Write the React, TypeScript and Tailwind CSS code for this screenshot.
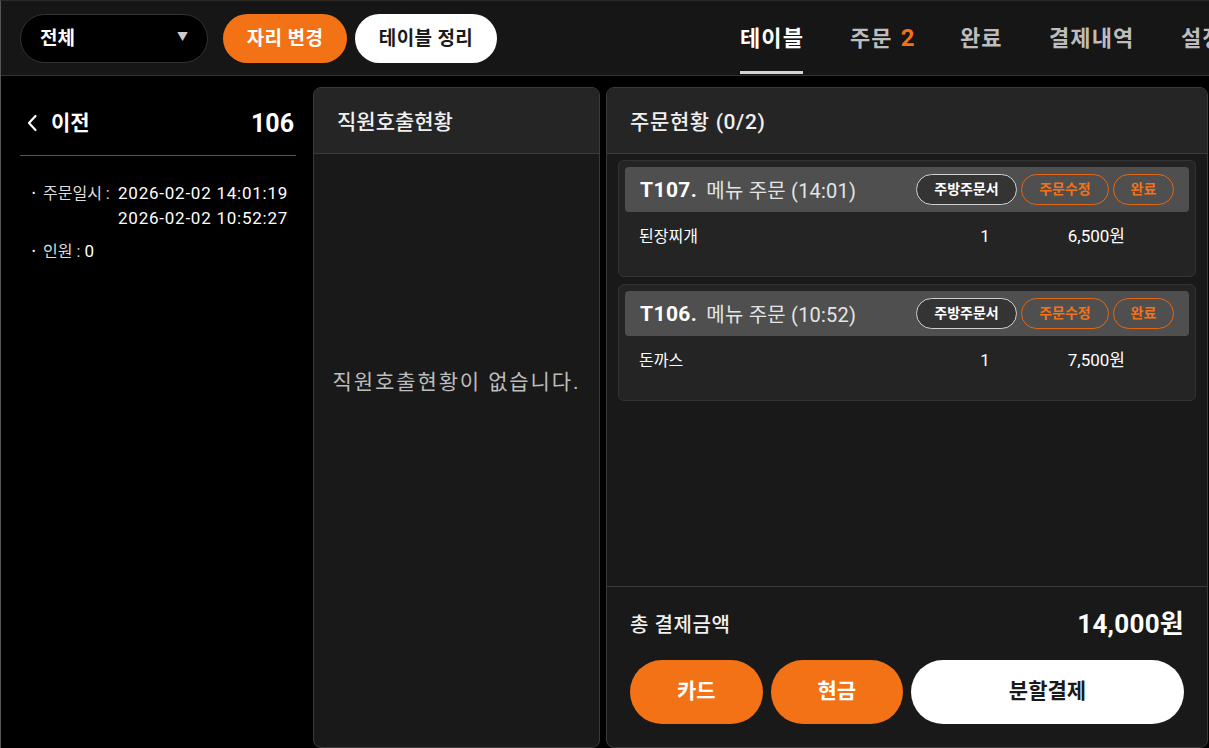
import React from "react";

const font = { fontFamily: 'Roboto, "Noto Sans CJK KR", "Noto Sans", sans-serif' };

function OrderCard({ table, time, item, qty, price }: { table: string; time: string; item: string; qty: string; price: string }) {
  return (
    <div className="mx-[11px] rounded-[6px] border border-[#333] bg-[#242424] p-[6px] h-[117px]">
      <div className="flex items-center h-[45px] rounded-[4px] bg-[#4f4f4f] pl-[15px] pr-[15px]">
        <span className="text-[21px] font-bold text-white tracking-[0.02em] pt-[2px]">{table}</span>
        <span className="ml-[9px] text-[20px] text-[#e4e4e4] tracking-[0.01em] pt-[2px]">메뉴 주문 ({time})</span>
        <div className="ml-auto flex items-center gap-[4px]">
          <button className="h-[31px] w-[101px] rounded-full border border-[#d0d0d0] bg-[#343434] text-[14px] font-semibold text-white">주방주문서</button>
          <button className="h-[31px] w-[88px] rounded-full border border-[#e5660f] text-[14px] font-semibold text-[#f47216]">주문수정</button>
          <button className="h-[31px] w-[61px] rounded-full border border-[#e5660f] text-[14px] font-semibold text-[#f47216]">완료</button>
        </div>
      </div>
      <div className="flex items-center h-[50px] pl-[14px] text-[16px] text-white">
        <span className="flex-1">{item}</span>
        <span className="w-[10px] text-center text-[17px]">{qty}</span>
        <span className="w-[199px] pr-[64px] text-right text-[17px]">{price}</span>
      </div>
    </div>
  );
}

export default function App() {
  return (
    <div style={font} className="w-[1209px] h-[748px] overflow-hidden bg-black flex flex-col border-l border-[#555] border-t border-t-[#2e2925]">
      {/* Header */}
      <div className="h-[75px] shrink-0 bg-[#161616] border-b border-[#333] flex items-center pl-[19px]">
        <div className="flex items-center h-[49px] w-[188px] rounded-full border border-[#333] bg-black pl-[19px] pr-[19px]">
          <span className="text-[19px] font-semibold text-white pt-[3px]">전체</span>
          <span className="ml-auto text-[11px] text-[#ccc]">▼</span>
        </div>
        <button className="ml-[15px] h-[49px] w-[124px] rounded-full bg-[#f47216] pt-[3px] text-[19px] font-bold text-white tracking-[0.02em]">자리 변경</button>
        <button className="ml-[8px] h-[49px] w-[142px] rounded-full bg-white pt-[3px] text-[19px] font-semibold text-[#1a1a1a] tracking-[0.02em]">테이블 정리</button>
        <div className="ml-auto flex items-stretch h-full text-[22px] font-semibold text-[#bdbdbd] whitespace-nowrap tracking-[0.05em]">
          <div className="relative flex items-center w-[63px] text-white">
            테이블
            <span className="absolute left-0 right-0 bottom-[1px] h-[3px] bg-[#d4d4d4]"></span>
          </div>
          <div className="flex items-center ml-[47px] w-[64px]">주문<span className="ml-[8px] font-bold text-[#f47216] text-[24px]">2</span></div>
          <div className="flex items-center ml-[46px] w-[43px]">완료</div>
          <div className="flex items-center ml-[46px] w-[86px]">결제내역</div>
          <div className="flex items-center ml-[46px] w-[28px] overflow-hidden">설정</div>
        </div>
      </div>

      {/* Main */}
      <div className="flex-1 flex pt-[11px] min-h-0">
        {/* Left */}
        <div className="w-[312px] shrink-0 -mt-[11px] pl-[19px] pr-[17px]">
          <div className="h-[80px] pt-[16px] pr-[2px] flex items-center border-b border-[#555] text-white">
            <svg width="12" height="18" viewBox="0 0 12 18" className="ml-[6px] -mt-[2px]"><path d="M9.5 2 L3 9 L9.5 16" stroke="white" strokeWidth="2.2" fill="none" strokeLinecap="round" strokeLinejoin="round" /></svg>
            <span className="ml-[13px] text-[21px] font-semibold">이전</span>
            <span className="ml-auto text-[25px] font-bold">106</span>
          </div>
          <div className="mt-[25px] text-[17px] text-white leading-[25px]">
            <div className="flex">
              <span className="w-[23px] pl-[12px] text-[10px]">•</span>
              <span className="w-[75px] text-[16px] text-[#ddd] whitespace-nowrap">주문일시 :</span>
              <div className="tracking-[0.045em]">
                <div>2026-02-02 14:01:19</div>
                <div>2026-02-02 10:52:27</div>
              </div>
            </div>
            <div className="flex mt-[8px]">
              <span className="w-[23px] pl-[12px] text-[10px]">•</span>
              <div><span className="text-[16px] text-[#ddd]">인원 :</span> 0</div>
            </div>
          </div>
        </div>

        {/* Middle */}
        <div className="w-[287px] shrink-0 h-[661px] rounded-[8px] border border-[#3a3a3a] bg-[#191919] flex flex-col overflow-hidden">
          <div className="h-[66px] shrink-0 bg-[#252525] border-b border-[#3a3a3a] flex items-center pl-[23px] pt-[4px] text-[21px] font-medium text-[#f0f0f0]">직원호출현황</div>
          <div className="pt-[213px] text-center text-[21px] text-[#bdbdbd] tracking-[0.09em]">직원호출현황이 없습니다.</div>
        </div>

        {/* Right */}
        <div className="ml-[6px] w-[602px] shrink-0 h-[661px] rounded-[8px] border border-[#3a3a3a] bg-[#191919] flex flex-col overflow-hidden">
          <div className="h-[66px] shrink-0 bg-[#252525] border-b border-[#3a3a3a] flex items-center pl-[23px] pt-[4px] text-[21px] font-medium text-[#f0f0f0] tracking-[0.03em]">주문현황 (0/2)</div>
          <div className="flex-1 pt-[6px] flex flex-col gap-[7px]">
            <OrderCard table="T107." time="14:01" item="된장찌개" qty="1" price="6,500원" />
            <OrderCard table="T106." time="10:52" item="돈까스" qty="1" price="7,500원" />
          </div>
          <div className="shrink-0 h-[161px] border-t border-[#3a3a3a] px-[23px]">
            <div className="flex items-center h-[73px] pt-[2px] text-white">
              <span className="text-[20px] font-medium text-[#f0f0f0] tracking-[0.03em]">총 결제금액</span>
              <span className="ml-auto text-[26px] font-bold tracking-[0.01em]">14,000원</span>
            </div>
            <div className="flex gap-[8px]">
              <button className="h-[64px] w-[133px] rounded-full bg-[#f47216] text-[21px] font-bold text-white">카드</button>
              <button className="h-[64px] w-[133px] rounded-full bg-[#f47216] text-[21px] font-bold text-white">현금</button>
              <button className="h-[64px] w-[274px] rounded-full bg-white text-[21px] font-bold text-[#1a1a1a]">분할결제</button>
            </div>
          </div>
        </div>
      </div>
    </div>
  );
}
